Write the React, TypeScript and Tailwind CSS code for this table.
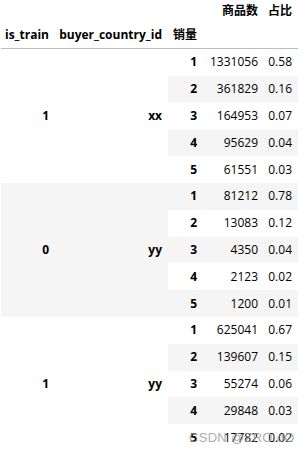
import React from "react";

type Row = { n: number; count: string; ratio: string };
type Group = { train: string; country: string; rows: Row[] };

const groups: Group[] = [
  {
    train: "1",
    country: "xx",
    rows: [
      { n: 1, count: "1331056", ratio: "0.58" },
      { n: 2, count: "361829", ratio: "0.16" },
      { n: 3, count: "164953", ratio: "0.07" },
      { n: 4, count: "95629", ratio: "0.04" },
      { n: 5, count: "61551", ratio: "0.03" },
    ],
  },
  {
    train: "0",
    country: "yy",
    rows: [
      { n: 1, count: "81212", ratio: "0.78" },
      { n: 2, count: "13083", ratio: "0.12" },
      { n: 3, count: "4350", ratio: "0.04" },
      { n: 4, count: "2123", ratio: "0.02" },
      { n: 5, count: "1200", ratio: "0.01" },
    ],
  },
  {
    train: "1",
    country: "yy",
    rows: [
      { n: 1, count: "625041", ratio: "0.67" },
      { n: 2, count: "139607", ratio: "0.15" },
      { n: 3, count: "55274", ratio: "0.06" },
      { n: 4, count: "29848", ratio: "0.03" },
      { n: 5, count: "17782", ratio: "0.02" },
    ],
  },
];

const cols = "grid grid-cols-[54px_113px_35px_61px_34px]";

export default function App() {
  let idx = 0;
  return (
    <div className="relative w-[302px] h-[452px] overflow-hidden bg-white text-black text-[12px] font-['Open_Sans','Noto_Sans_CJK_SC',sans-serif]">
      <div className="ml-[1px] w-[297px]">
        {/* header */}
        <div className={`${cols} h-[21px] items-center font-bold`}>
          <div />
          <div />
          <div />
          <div className="pr-[6px] text-right">商品数</div>
          <div className="pr-[6px] text-right">占比</div>
        </div>
        <div className={`${cols} h-[28px] items-center font-bold border-b border-[#bdbdbd]`}>
          <div className="pr-[6px] text-right">is_train</div>
          <div className="pr-[6px] text-right">buyer_country_id</div>
          <div className="pr-[6px] text-right">销量</div>
          <div />
          <div />
        </div>
        {/* body */}
        {groups.map((g, gi) => {
          const startIdx = idx;
          idx += g.rows.length;
          const groupGray = (startIdx + 1) % 2 === 0;
          return (
            <div key={gi} className="flex">
              <div
                className={`w-[167px] flex items-center font-bold ${
                  groupGray ? "bg-[#f5f5f5]" : "bg-white"
                }`}
              >
                <div className="w-[54px] pr-[6px] text-right">{g.train}</div>
                <div className="w-[113px] pr-[6px] text-right">{g.country}</div>
              </div>
              <div className="flex flex-col w-[130px]">
                {g.rows.map((r, ri) => {
                  const gray = (startIdx + ri + 1) % 2 === 0;
                  return (
                    <div
                      key={ri}
                      className={`flex items-center h-[26.8px] ${
                        gray ? "bg-[#f5f5f5]" : "bg-white"
                      }`}
                    >
                      <div className="w-[35px] pr-[6px] text-right font-bold">{r.n}</div>
                      <div className="w-[61px] pr-[6px] text-right">{r.count}</div>
                      <div className="w-[34px] pr-[6px] text-right">{r.ratio}</div>
                    </div>
                  );
                })}
              </div>
            </div>
          );
        })}
      </div>
      <div className="absolute left-[189px] top-[428px] text-[13px] text-[#9a9a9a] opacity-80 font-['Liberation_Sans',sans-serif] tracking-[0.3px]">
        CSDN @ZRO.oO
      </div>
    </div>
  );
}
